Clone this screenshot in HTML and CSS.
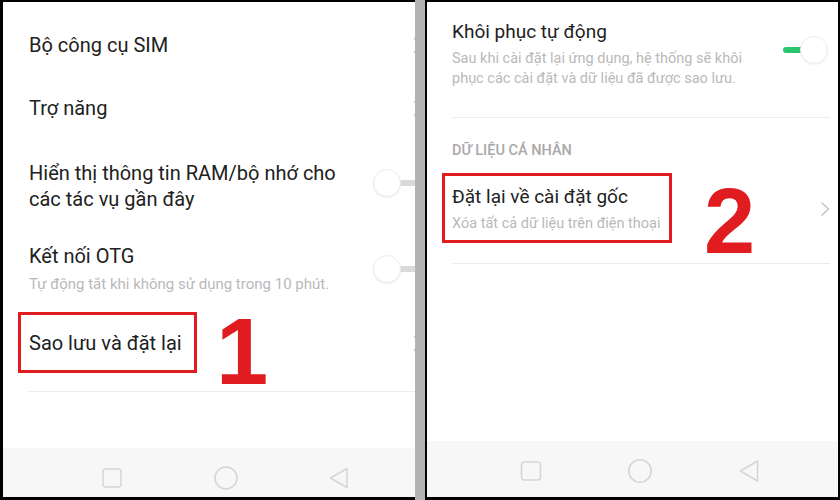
FILE: index.html
```html
<!DOCTYPE html>
<html lang="vi">
<head>
<meta charset="utf-8">
<title>Sao lưu và đặt lại</title>
<link rel="stylesheet" href="styles.css">
</head>
<body>
<div class="frame">
  <section class="screen screen--left">
    <ul class="list list--left">
      <li class="row">
        <span class="title">Bộ công cụ SIM</span>
        <svg class="chev chev--cut" width="10" height="17" viewBox="0 0 10 17"><path d="M1.5 1.5 L8.5 8.5 L1.5 15.5" fill="none" stroke="#c9c9c9" stroke-width="1.6" stroke-linecap="round" stroke-linejoin="round"/></svg>
      </li>
      <li class="row row--loose">
        <span class="title">Trợ năng</span>
        <svg class="chev chev--cut" width="10" height="17" viewBox="0 0 10 17"><path d="M1.5 1.5 L8.5 8.5 L1.5 15.5" fill="none" stroke="#c9c9c9" stroke-width="1.6" stroke-linecap="round" stroke-linejoin="round"/></svg>
      </li>
      <li class="row row--multi">
        <div class="text"><div class="title">Hiển thị thông tin RAM/bộ nhớ cho các tác vụ gần đây</div></div>
        <span class="toggle toggle--off toggle--cut"><span class="knob"></span></span>
      </li>
      <li class="row row--sub">
        <div class="text">
          <div class="title">Kết nối OTG</div>
          <div class="sub sub--left">Tự động tắt khi không sử dụng trong 10 phút.</div>
        </div>
        <span class="toggle toggle--off toggle--cut"><span class="knob"></span></span>
      </li>
      <li class="row">
        <span class="mark mark--one"><span class="title">Sao lưu và đặt lại</span></span>
        <svg class="chev chev--cut" width="10" height="17" viewBox="0 0 10 17"><path d="M1.5 1.5 L8.5 8.5 L1.5 15.5" fill="none" stroke="#c9c9c9" stroke-width="1.6" stroke-linecap="round" stroke-linejoin="round"/></svg>
      </li>
    </ul>
    <div class="rule rule--left"></div>
    <div class="annot annot--one">1</div>
    <nav class="navbar navbar--left">
      <svg width="24" height="24" viewBox="0 0 24 24"><rect x="3" y="3" width="18" height="18" rx="3" fill="none" stroke="#d6d6d6" stroke-width="1.6"/></svg>
      <svg width="24" height="24" viewBox="0 0 24 24"><circle cx="12" cy="12" r="11" fill="none" stroke="#d6d6d6" stroke-width="1.6"/></svg>
      <svg width="24" height="24" viewBox="0 0 24 24"><path d="M20 2.5 L3.5 12 L20 21.5 Z" fill="none" stroke="#d6d6d6" stroke-width="1.6" stroke-linejoin="round"/></svg>
    </nav>
  </section>

  <div class="gutter"></div>

  <section class="screen screen--right">
    <div class="list list--right">
      <div class="row row--first">
        <div class="text text--wrap">
          <div class="title title--right">Khôi phục tự động</div>
          <div class="sub">Sau khi cài đặt lại ứng dụng, hệ thống sẽ khôi phục các cài đặt và dữ liệu đã được sao lưu.</div>
        </div>
        <span class="toggle toggle--on"><span class="knob"></span></span>
      </div>
      <div class="section-label">Dữ liệu cá nhân</div>
      <div class="row row--reset">
        <span class="mark mark--two">
          <span class="title title--right">Đặt lại về cài đặt gốc</span>
          <span class="sub">Xóa tất cả dữ liệu trên điện thoại</span>
        </span>
        <svg class="chev" width="10" height="16" viewBox="0 0 10 16"><path d="M2 2 L8.5 8 L2 14" fill="none" stroke="#c4c4c4" stroke-width="1.5" stroke-linecap="round" stroke-linejoin="round"/></svg>
      </div>
    </div>
    <div class="annot annot--two">2</div>
    <nav class="navbar navbar--right">
      <svg width="24" height="24" viewBox="0 0 24 24"><rect x="2.5" y="3" width="19" height="18" rx="3" fill="none" stroke="#d6d6d6" stroke-width="1.6"/></svg>
      <svg width="24" height="24" viewBox="0 0 24 24"><circle cx="12" cy="12" r="11.2" fill="none" stroke="#d6d6d6" stroke-width="1.6"/></svg>
      <svg width="24" height="24" viewBox="0 0 24 24"><path d="M20.5 2 L3.5 12 L20.5 22 Z" fill="none" stroke="#d6d6d6" stroke-width="1.6" stroke-linejoin="round"/></svg>
    </nav>
  </section>
</div>
</body>
</html>
```

FILE: styles.css
```css
html, body {
  margin: 0;
  padding: 0;
  background: #000;
}

.frame {
  display: flex;
  width: 840px;
  height: 500px;
  background: #000;
}

.screen {
  position: relative;
  display: flex;
  flex-direction: column;
  overflow: hidden;
  background: #fff;
  font-family: Roboto, "Noto Sans", sans-serif;
  color: #222;
}

.screen--left {
  width: 412px;
  margin: 2px 0 3px 3px;
}

.gutter {
  width: 10px;
  margin-right: 2px;
  background: #b3b3b3;
}

.screen--right {
  flex: 1;
  margin: 2px 2px 3px 0;
}

.list {
  margin: 0;
  padding: 0;
  list-style: none;
}

.list--left {
  padding-top: 12px;
}

.list--right {
  flex: 1;
}

.row {
  display: flex;
  align-items: center;
  justify-content: space-between;
  gap: 20px;
  margin-left: 26px;
  padding: 18px 0;
}

.row--loose {
  padding: 19px 0;
}

.row--multi {
  padding: 20px 0 15px;
}

.row--multi .toggle {
  margin-top: -6px;
}

.row--sub {
  padding: 16px 0 18px;
}

.title {
  display: block;
  font-size: 20px;
  line-height: 26px;
  color: #212121;
}

.title--right {
  font-size: 19px;
}

.sub {
  display: block;
  margin-top: 4px;
  font-size: 14.5px;
  line-height: 20px;
  color: #b9b9b9;
}

.sub--left {
  margin-top: 5px;
  font-size: 15px;
}

.text {
  flex: 1;
  min-width: 0;
}

.text--wrap {
  padding-right: 10px;
}

.chev {
  flex: none;
}

.chev--cut {
  margin-right: -8px;
}

/* toggle switch */
.toggle {
  position: relative;
  flex: none;
  width: 45px;
  height: 30px;
}

.toggle::before {
  content: "";
  position: absolute;
  top: 12px;
  height: 6px;
  border-radius: 3px;
}

.toggle--off::before {
  left: 14px;
  right: -6px;
  background: #dadada;
}

.toggle--on::before {
  left: 0;
  right: 14px;
  background: #2bc46f;
}

.toggle--cut {
  margin-right: -3px;
}

.knob {
  position: absolute;
  top: 1px;
  width: 28px;
  height: 28px;
  box-sizing: border-box;
  border-radius: 50%;
  background: #fff;
  border: 1px solid #ececec;
  box-shadow: 0 1px 2px rgba(0, 0, 0, 0.06);
}

.toggle--off .knob {
  left: 0;
}

.toggle--on .knob {
  right: 0;
}

/* annotation boxes */
.mark {
  position: relative;
  display: inline-block;
}

.mark::after {
  content: "";
  position: absolute;
  border: 3px solid #e01c20;
}

.mark--one::after {
  top: -18px;
  bottom: -17px;
  left: -11px;
  right: -15px;
}

.mark--two::after {
  top: -11px;
  bottom: -9px;
  left: -10px;
  right: -11px;
}

.annot {
  position: absolute;
  font-family: "Liberation Sans", Arial, sans-serif;
  font-weight: 700;
  line-height: 1;
  color: #e01c20;
}

.annot--one {
  left: 213px;
  top: 303px;
  font-size: 94px;
}

.annot--two {
  left: 277px;
  top: 173px;
  font-size: 92px;
}

.rule {
  height: 1px;
  background: #ededed;
}

.rule--left {
  margin: 17px 0 0 25px;
}

/* right panel */
.row--first {
  margin-right: 8px;
  margin-left: 25px;
  padding: 17px 0 28px;
  border-bottom: 1px solid #ececec;
}

.row--first .toggle {
  margin-right: 2px;
  margin-top: -8px;
}

.section-label {
  margin: 25px 8px 0 25px;
  font-size: 14.5px;
  line-height: 16px;
  font-weight: 500;
  text-transform: uppercase;
  color: #a9a9a9;
}

.row--reset {
  margin-right: 8px;
  margin-left: 25px;
  padding: 25px 0 29px;
  border-bottom: 1px solid #ececec;
}

/* navigation bar */
.navbar {
  display: flex;
  align-items: flex-start;
  flex: none;
  margin-top: auto;
  background: #f7f7f7;
  padding-top: 18px;
  box-sizing: border-box;
}

.navbar--left {
  height: 49px;
  padding-left: 97px;
  gap: 89.5px;
}

.navbar--right {
  height: 56px;
  padding-left: 92px;
  gap: 85px;
}
```
